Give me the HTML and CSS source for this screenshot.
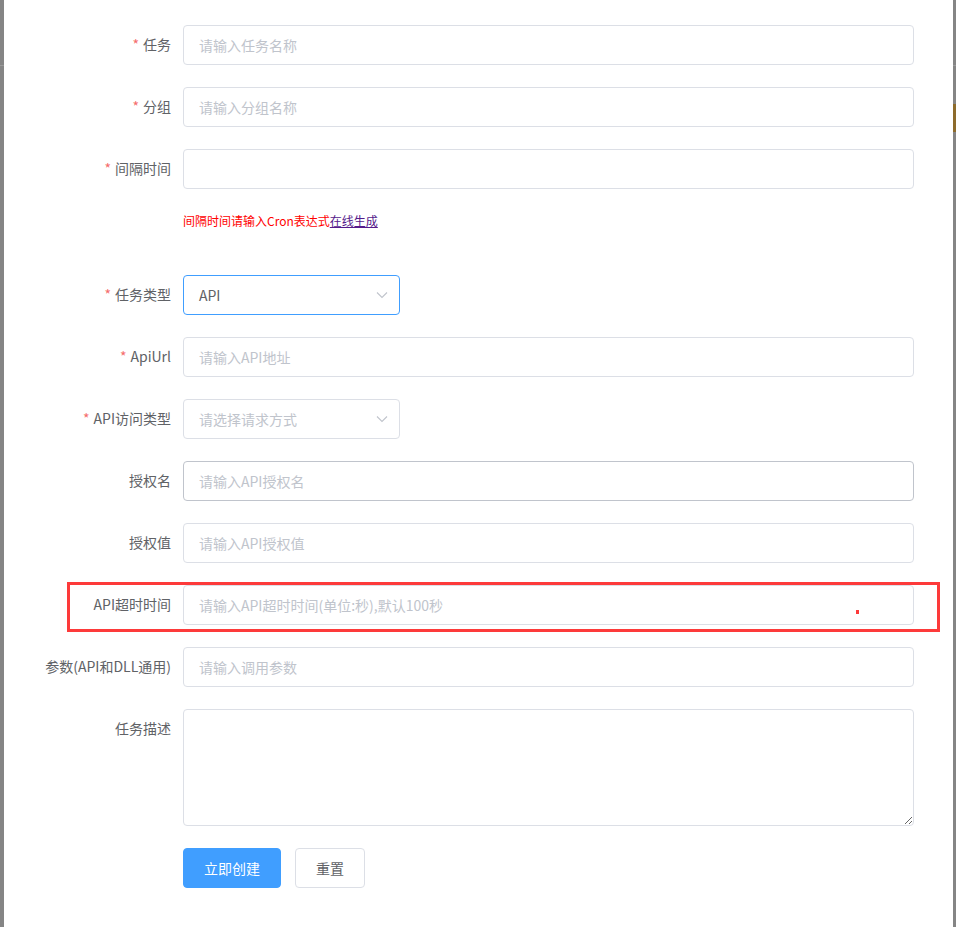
FILE: index.html
```html
<!DOCTYPE html>
<html lang="zh-CN">
<head>
<meta charset="utf-8">
<title>任务</title>
<link rel="stylesheet" href="styles.css">
</head>
<body>
<div class="page">
  <div class="edge edge-left"><div class="edge-line"></div></div>
  <div class="dialog">
    <form class="form">
      <div class="row">
        <label class="label"><span class="req">*</span>任务</label>
        <div class="control"><input class="input" placeholder="请输入任务名称"></div>
      </div>
      <div class="row">
        <label class="label"><span class="req">*</span>分组</label>
        <div class="control"><input class="input" placeholder="请输入分组名称"></div>
      </div>
      <div class="row row-tight">
        <label class="label"><span class="req">*</span>间隔时间</label>
        <div class="control"><input class="input"></div>
      </div>
      <div class="hint">间隔时间请输入Cron表达式<a class="hint-link" href="#">在线生成</a></div>
      <div class="row">
        <label class="label"><span class="req">*</span>任务类型</label>
        <div class="control">
          <div class="select is-focus"><span class="select-value">API</span>
            <svg class="arrow" width="12" height="8" viewBox="0 0 12 8"><polyline points="1,1.5 6,6.5 11,1.5" fill="none" stroke="#c0c4cc" stroke-width="1.1"/></svg>
          </div>
        </div>
      </div>
      <div class="row">
        <label class="label"><span class="req">*</span>ApiUrl</label>
        <div class="control"><input class="input" placeholder="请输入API地址"></div>
      </div>
      <div class="row">
        <label class="label"><span class="req">*</span>API访问类型</label>
        <div class="control">
          <div class="select"><span class="select-placeholder">请选择请求方式</span>
            <svg class="arrow" width="12" height="8" viewBox="0 0 12 8"><polyline points="1,1.5 6,6.5 11,1.5" fill="none" stroke="#c0c4cc" stroke-width="1.1"/></svg>
          </div>
        </div>
      </div>
      <div class="row">
        <label class="label">授权名</label>
        <div class="control"><input class="input is-hover" placeholder="请输入API授权名"></div>
      </div>
      <div class="row">
        <label class="label">授权值</label>
        <div class="control"><input class="input" placeholder="请输入API授权值"></div>
      </div>
      <div class="row row-marked">
        <label class="label">API超时时间</label>
        <div class="control"><input class="input" placeholder="请输入API超时时间(单位:秒),默认100秒"></div>
        <div class="mark-box"></div>
        <div class="mark-dot"></div>
      </div>
      <div class="row">
        <label class="label">参数(API和DLL通用)</label>
        <div class="control"><input class="input" placeholder="请输入调用参数"></div>
      </div>
      <div class="row">
        <label class="label">任务描述</label>
        <div class="control"><textarea class="textarea"></textarea></div>
      </div>
      <div class="row">
        <div class="label"></div>
        <div class="control buttons">
          <button type="button" class="btn btn-primary">立即创建</button>
          <button type="button" class="btn btn-default">重置</button>
        </div>
      </div>
    </form>
  </div>
  <div class="edge edge-right"><div class="edge-line"></div><div class="edge-gold"></div></div>
</div>
</body>
</html>
```

FILE: styles.css
```css
* { box-sizing: border-box; }
html, body { margin: 0; padding: 0; background: #fff; }
body {
  font-family: "Noto Sans CJK SC", "Microsoft YaHei", "Liberation Sans", sans-serif;
  font-size: 14px;
  color: #606266;
}
.page {
  display: flex;
  width: 956px;
  height: 927px;
  overflow: hidden;
}
.edge {
  background: #858585;
  flex: none;
  position: relative;
}
.edge-left { width: 4px; }
.edge-right { width: 3px; }
.edge-line {
  position: absolute;
  left: 0; right: 0;
  top: 65px;
  height: 1px;
  background: #9a9a9a;
}
.edge-gold {
  position: absolute;
  left: 0; right: 0;
  top: 104px;
  height: 28px;
  background: #8d6b2c;
}
.dialog {
  flex: 1;
  background: #fff;
  padding: 25px 39px 0 29px;
}
.form { display: flex; flex-direction: column; }
.row {
  display: flex;
  align-items: flex-start;
  margin-bottom: 22px;
  position: relative;
}
.row-tight { margin-bottom: 0; }
.label {
  width: 150px;
  flex: none;
  text-align: right;
  padding-right: 12px;
  line-height: 39px;
  font-size: 14px;
  color: #606266;
  white-space: nowrap;
}
.req {
  color: #f56c6c;
  margin-right: 4px;
}
.control { flex: 1; min-width: 0; }
.input {
  display: block;
  width: 100%;
  height: 40px;
  border: 1px solid #dcdfe6;
  border-radius: 4px;
  padding: 0 15px 1px;
  font-family: inherit;
  font-size: 14px;
  color: #606266;
  background: #fff;
  outline: none;
}
.input::placeholder { color: #c0c4cc; }
.input.is-hover { border-color: #c0c4cc; }
.hint {
  margin: 24px 0 46px 150px;
  font-size: 12px;
  line-height: 16px;
  color: #ff0000;
}
.hint-link {
  color: #551a8b;
  text-decoration: underline;
}
.select {
  width: 217px;
  height: 40px;
  border: 1px solid #dcdfe6;
  border-radius: 4px;
  padding: 0 15px 1px;
  display: flex;
  align-items: center;
  justify-content: space-between;
  background: #fff;
}
.select.is-focus { border-color: #409eff; }
.select-value { color: #606266; }
.select-placeholder { color: #c0c4cc; }
.arrow { margin-right: -4px; margin-top: 1px; }
.textarea {
  display: block;
  width: 100%;
  height: 117px;
  border: 1px solid #dcdfe6;
  border-radius: 4px;
  padding: 5px 15px;
  font-family: inherit;
  font-size: 14px;
  color: #606266;
  resize: vertical;
  outline: none;
}
.buttons {
  display: flex;
  gap: 14px;
}
.btn {
  height: 40px;
  border-radius: 4px;
  font-family: inherit;
  font-size: 14px;
  padding: 0 20px 1px;
  cursor: pointer;
}
.btn-primary {
  width: 98px;
  background: #409eff;
  border: 1px solid #409eff;
  color: #fff;
}
.btn-default {
  width: 70px;
  background: #fff;
  border: 1px solid #dcdfe6;
  color: #606266;
}
.mark-box {
  position: absolute;
  left: 34px;
  top: -3px;
  width: 873px;
  height: 50px;
  border: 3px solid #fd3a3a;
  pointer-events: none;
}
.mark-dot {
  position: absolute;
  left: 823px;
  top: 25px;
  width: 3px;
  height: 4px;
  background: #fd3a3a;
}
```
